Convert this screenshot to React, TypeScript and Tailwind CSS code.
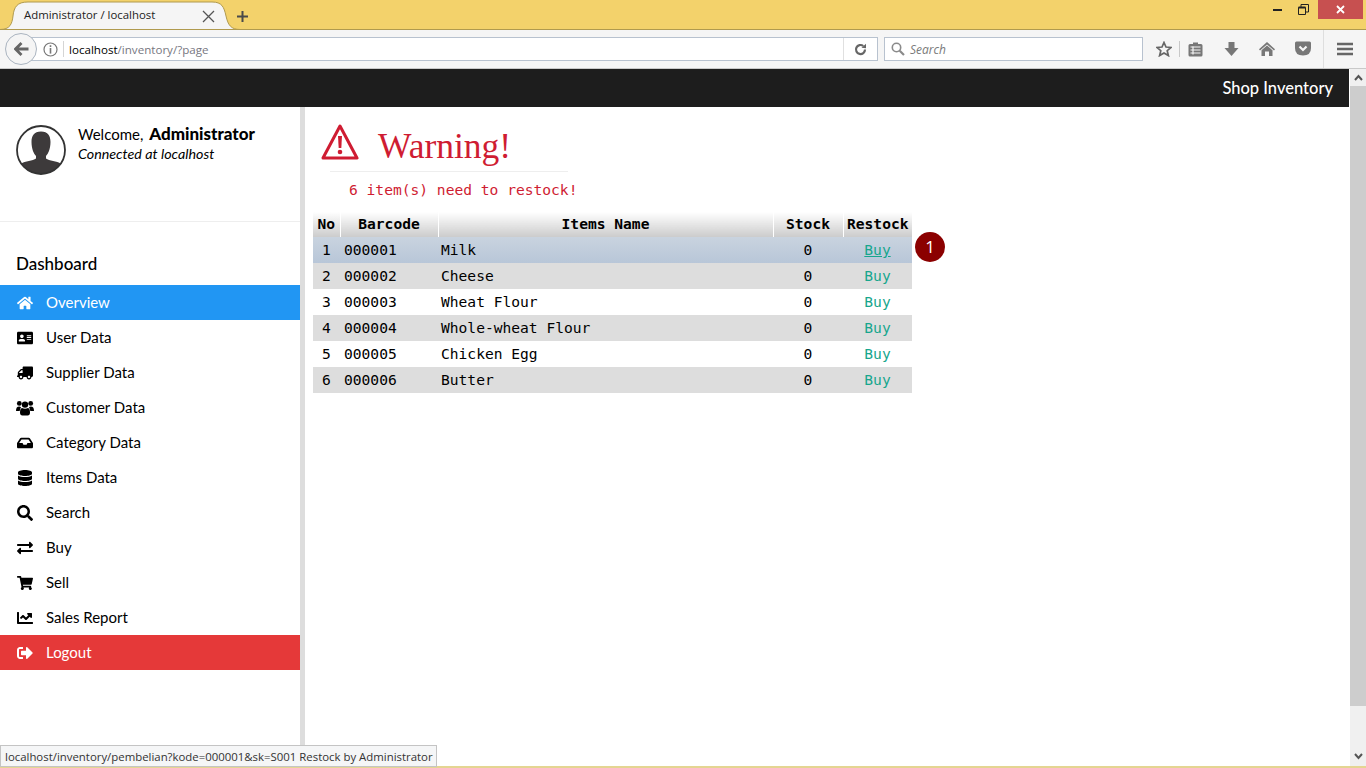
// App.tsx
import React from "react";
import {
  FaHome,
  FaAddressCard,
  FaTruck,
  FaInbox,
  FaDatabase,
  FaSearch,
  FaExchangeAlt,
  FaShoppingCart,
  FaChartLine,
  FaSignOutAlt,
} from "react-icons/fa";

// FA4 style users icon, the package one is too flat
const UsersIcon = ({ className }: { className?: string }) => (
  <svg className={className} width="18" height="16" viewBox="0 0 18 16" fill="currentColor">
    <circle cx="3.3" cy="3.4" r="2.4" />
    <circle cx="14.7" cy="3.4" r="2.4" />
    <circle cx="9" cy="4.6" r="3.2" />
    <path d="M0 11 Q0 6.6 3.2 6.6 Q4.2 6.6 5 7.3 Q4 9 3.7 11 H0 Z" />
    <path d="M18 11 Q18 6.6 14.8 6.6 Q13.8 6.6 13 7.3 Q14 9 14.3 11 H18 Z" />
    <path d="M6 8 Q9 9.6 12 8 Q14 8.4 14 12.6 Q14 15.5 11.6 15.5 H6.4 Q4 15.5 4 12.6 Q4 8.4 6 8 Z" />
  </svg>
);

const TruckIcon = ({ className }: { className?: string }) => (
  <FaTruck className={`${className} -scale-x-100`} />
);

const menu = [
  { label: "Overview", icon: FaHome, active: "bg-[#2196f3] text-white" },
  { label: "User Data", icon: FaAddressCard, active: "" },
  { label: "Supplier Data", icon: TruckIcon, active: "" },
  { label: "Customer Data", icon: UsersIcon, active: "" },
  { label: "Category Data", icon: FaInbox, active: "" },
  { label: "Items Data", icon: FaDatabase, active: "" },
  { label: "Search", icon: FaSearch, active: "" },
  { label: "Buy", icon: FaExchangeAlt, active: "" },
  { label: "Sell", icon: FaShoppingCart, active: "" },
  { label: "Sales Report", icon: FaChartLine, active: "" },
  { label: "Logout", icon: FaSignOutAlt, active: "bg-[#e53939] text-white" },
];

const items = [
  { no: 1, code: "000001", name: "Milk" },
  { no: 2, code: "000002", name: "Cheese" },
  { no: 3, code: "000003", name: "Wheat Flour" },
  { no: 4, code: "000004", name: "Whole-wheat Flour" },
  { no: 5, code: "000005", name: "Chicken Egg" },
  { no: 6, code: "000006", name: "Butter" },
];

const TabBar = () => (
  <div className="h-[30px] flex bg-[#f3d26b] border-b border-[#b09a4e] relative shrink-0">
    {/* tab shape */}
    <svg className="absolute left-0 top-0" width="240" height="30" viewBox="0 0 240 30">
      <path
        d="M0 29.5 C10 29.5 12 24 13 16 C14 7 17 2 28 2 L212 2 C222 2 224 7 226 16 C228 25 231 29.5 240 29.5 Z"
        fill="#f5f5f5"
        stroke="#b09a4e"
      />
    </svg>
    <span className="relative ml-[24px] mt-[7px] text-[11.4px] leading-[16px] text-[#222] font-['Open_Sans',sans-serif]">
      Administrator / localhost
    </span>
    <svg className="absolute left-[202px] top-[10px]" width="13" height="13" viewBox="0 0 13 13">
      <path d="M1 1 L12 12 M12 1 L1 12" stroke="#555" strokeWidth="1.3" />
    </svg>
    <svg className="absolute left-[236px] top-[10px]" width="13" height="13" viewBox="0 0 13 13">
      <path d="M6.5 1 V12 M1 6.5 H12" stroke="#4a4a4a" strokeWidth="2" />
    </svg>
    {/* window controls */}
    <svg className="absolute left-[1273px] top-[8px]" width="10" height="4" viewBox="0 0 10 4">
      <rect y="1" width="9" height="2" fill="#222" />
    </svg>
    <svg className="absolute left-[1298px] top-[4px]" width="11" height="11" viewBox="0 0 11 11">
      <path d="M0.5 3.5 H7.5 V10.5 H0.5 Z M3 3 V0.5 H10.5 V8 H8" fill="none" stroke="#222" />
      <path d="M0.5 3.5 H7.5" stroke="#222" strokeWidth="2" />
    </svg>
    <div className="absolute left-[1318px] top-0 w-[45px] h-[19px] bg-[#c75050] flex items-center justify-center">
      <svg width="9" height="9" viewBox="0 0 9 9">
        <path d="M1 1 L8 8 M8 1 L1 8" stroke="#fff" strokeWidth="1.8" />
      </svg>
    </div>
  </div>
);

const Toolbar = () => (
  <div className="h-[39px] bg-[#f5f5f5] border-b border-[#c9c9c9] relative flex items-center shrink-0 font-['Open_Sans',sans-serif]">
    {/* url bar */}
    <div className="ml-[20px] w-[858px] h-[24px] bg-white border border-[#b8c2cf] flex items-center">
      <svg className="ml-[22px]" width="15" height="15" viewBox="0 0 15 15">
        <circle cx="7.5" cy="7.5" r="6.5" fill="none" stroke="#777" strokeWidth="1.2" />
        <rect x="6.7" y="3.2" width="1.6" height="1.8" fill="#777" />
        <rect x="6.7" y="6" width="1.6" height="5.6" fill="#777" />
      </svg>
      <div className="ml-[5px] w-px h-[16px] bg-[#d5d5d5]" />
      <span className="ml-[5px] mt-[2px] text-[11.6px] text-black">
        localhost<span className="text-[#77777f]">/inventory/?page</span>
      </span>
      <div className="ml-auto w-px h-[22px] bg-[#e0e0e0]" />
      <svg className="mx-[10px]" width="13" height="13" viewBox="0 0 13 13">
        <path d="M11 6.5 A4.5 4.5 0 1 1 9.3 3" fill="none" stroke="#666" strokeWidth="2.2" />
        <path d="M7.5 4.8 L12 5.2 V0.8 Z" fill="#666" />
      </svg>
    </div>
    {/* search box */}
    <div className="ml-[6px] w-[259px] h-[24px] bg-white border border-[#b8c2cf] flex items-center">
      <svg className="ml-[6px]" width="14" height="14" viewBox="0 0 14 14">
        <circle cx="5.5" cy="5.5" r="4.2" fill="none" stroke="#8a8a8a" strokeWidth="1.6" />
        <path d="M8.7 8.7 L13 13" stroke="#8a8a8a" strokeWidth="2.2" />
      </svg>
      <span className="ml-[5px] mt-[2px] text-[12px] italic text-[#7a7a7a]">Search</span>
    </div>
    {/* back button */}
    <div className="absolute left-[5px] top-[3px] w-[32px] h-[32px] rounded-full bg-[#f5f5f5] border border-[#aab4c0] flex items-center justify-center">
      <svg width="15" height="14" viewBox="0 0 15 14">
        <path d="M7.5 1 L1.5 7 L7.5 13 M2 7 H14.5" fill="none" stroke="#666" strokeWidth="2.8" />
      </svg>
    </div>
    {/* right side icons */}
    <svg className="absolute left-[1156px] top-[11px]" width="16" height="16" viewBox="0 0 16 16">
      <path d="M8 1.5 L10 6 L15 6.5 L11.2 9.7 L12.4 14.6 L8 12 L3.6 14.6 L4.8 9.7 L1 6.5 L6 6 Z" fill="none" stroke="#666" strokeWidth="1.7" />
    </svg>
    <div className="absolute left-[1179px] top-[11px] w-px h-[16px] bg-[#c8c8c8]" />
    <svg className="absolute left-[1188px] top-[11px]" width="15" height="16" viewBox="0 0 15 16">
      <path d="M2 3 H5 V1.5 H10 V3 H13 Q14.5 3 14.5 4.5 V14 Q14.5 15.5 13 15.5 H2 Q0.5 15.5 0.5 14 V4.5 Q0.5 3 2 3 Z" fill="#777" />
      <path d="M2.5 6 H12.5 M2.5 9 H12.5 M2.5 12 H12.5" stroke="#f5f5f5" strokeWidth="1.2" />
      <path d="M5 5.5 V13.5" stroke="#f5f5f5" strokeWidth="1.2" />
    </svg>
    <svg className="absolute left-[1224px] top-[11px]" width="15" height="16" viewBox="0 0 15 16">
      <path d="M4.5 1 H10.5 V7 H14.5 L7.5 15 L0.5 7 H4.5 Z" fill="#777" />
    </svg>
    <svg className="absolute left-[1259px] top-[11px]" width="16" height="16" viewBox="0 0 16 16">
      <path d="M8 1 L16 8.2 L15 9.5 L8 3.4 L1 9.5 L0 8.2 Z" fill="#777" />
      <path d="M8 4.6 L13.5 9.3 V15 H10 V10.5 H6 V15 H2.5 V9.3 Z" fill="#777" />
    </svg>
    <svg className="absolute left-[1295px] top-[11px]" width="16" height="15" viewBox="0 0 16 15">
      <path d="M1.5 0.5 H14.5 Q16 0.5 16 2 V7 Q16 14.5 8 14.5 Q0 14.5 0 7 V2 Q0 0.5 1.5 0.5 Z" fill="#777" />
      <path d="M4.5 5.5 L8 9 L11.5 5.5" fill="none" stroke="#f5f5f5" strokeWidth="2.2" />
    </svg>
    <div className="absolute left-[1323px] top-0 w-px h-[38px] bg-[#dedede]" />
    <svg className="absolute left-[1337px] top-[12px]" width="16" height="14" viewBox="0 0 16 14">
      <path d="M0 2 H16 M0 7 H16 M0 12 H16" stroke="#666" strokeWidth="2.6" />
    </svg>
  </div>
);

const Avatar = () => (
  <svg width="50" height="50" viewBox="0 0 50 50" className="shrink-0">
    <defs>
      <clipPath id="avatarClip">
        <circle cx="25" cy="25" r="24" />
      </clipPath>
    </defs>
    <circle cx="25" cy="25" r="24" fill="#fff" />
    <g clipPath="url(#avatarClip)" fill="#3d3a3b">
      <path d="M25 6.5 C18 6.5 15.5 11 15.5 17 C15.5 24 18 29 20 31 V33.5 C17 36 9 35.5 5 39 L5 50 H45 V39 C41 35.5 33 36 30 33.5 V31 C32 29 34.5 24 34.5 17 C34.5 11 32 6.5 25 6.5 Z" />
    </g>
    <circle cx="25" cy="25" r="24" fill="none" stroke="#333" strokeWidth="1.8" />
  </svg>
);

const Sidebar = () => (
  <aside className="w-[305px] shrink-0 border-r-[5px] border-[#dddddd] bg-white font-['Lato',sans-serif] text-black">
    <div className="h-[115px] border-b border-[#eeeeee] flex pl-[16px] pt-[18px]">
      <Avatar />
      <div className="ml-[12px] -mt-[1px] text-[15px] leading-[20px]">
        <div>
          Welcome, <b className="ml-[2px] text-[17px] font-black">Administrator</b>
        </div>
        <div className="italic text-[14.3px]">Connected at localhost</div>
      </div>
    </div>
    <div className="pl-[16px] pt-[31px] pb-[11px] text-[17px] leading-[21px] font-medium">Dashboard</div>
    <nav>
      {menu.map((m) => (
        <div key={m.label} className={`h-[35px] flex items-center text-[15px] ${m.active}`}>
          <span className="w-[46px] flex justify-center pl-[7px] pr-[3px]">
            <m.icon className="text-[16px]" />
          </span>
          {m.label}
        </div>
      ))}
    </nav>
  </aside>
);

const thClass = "p-0 pb-[2px] border-r border-white bg-gradient-to-b from-white to-[#cccccc] text-center font-bold";

const StockTable = () => (
  <div className="relative w-[599px] ml-[8px] mt-[13px]">
    <table className="w-[599px] table-fixed border-collapse text-[14.6px] text-black">
      <colgroup>
        <col className="w-[27px]" />
        <col className="w-[98px]" />
        <col className="w-[335px]" />
        <col className="w-[70px]" />
        <col className="w-[69px]" />
      </colgroup>
      <thead>
        <tr className="h-[25px]">
          <th className={thClass}>No</th>
          <th className={thClass}>Barcode</th>
          <th className={thClass}>Items Name</th>
          <th className={thClass}>Stock</th>
          <th className="p-0 pb-[2px] bg-gradient-to-b from-white to-[#cccccc] text-center font-bold">Restock</th>
        </tr>
      </thead>
      <tbody>
        {items.map((item, i) => (
          <tr
            key={item.no}
            className={
              i === 0
                ? "bg-gradient-to-b from-[#c9d3df] to-[#b8c6d8]"
                : i % 2 === 1
                  ? "bg-[#dddddd]"
                  : "bg-white"
            }
          >
            <td className="h-[26px] p-0 text-center">{item.no}</td>
            <td className="p-0 pl-[4px]">{item.code}</td>
            <td className="p-0 pl-[3px]">{item.name}</td>
            <td className="p-0 text-center">0</td>
            <td className={`p-0 text-center text-[#17a68d] ${i === 0 ? "underline" : ""}`}>Buy</td>
          </tr>
        ))}
      </tbody>
    </table>
    {/* step marker */}
    <div className="absolute left-[602px] top-[20px] w-[30px] h-[30px] rounded-full bg-[#8b0000] text-white flex items-center justify-center text-[17px] font-['Open_Sans',sans-serif]">
      1
    </div>
  </div>
);

const App: React.FC = () => {
  return (
    <div className="w-[1366px] h-[768px] overflow-hidden flex flex-col relative bg-white">
      <TabBar />
      <Toolbar />
      <div className="flex-1 min-h-0 flex">
        <div className="flex-1 flex flex-col min-w-0">
          {/* Header */}
          <header className="h-[38px] shrink-0 bg-[#1d1d1d] text-white flex items-center justify-end pr-[16px] border-r border-white text-[16.5px] font-medium font-['Lato',sans-serif]">
            Shop Inventory
          </header>
          <div className="flex-1 flex min-h-0">
            <Sidebar />
            <main className="flex-1 font-['DejaVu_Sans_Mono',monospace]">
              <div className="flex items-center pl-[16px] pt-[16px] h-[54px]">
                <svg width="38" height="38" viewBox="0 0 38 38">
                  <path d="M19 3 L36 35 H2 Z" fill="none" stroke="#cf1c32" strokeWidth="3" strokeLinejoin="round" />
                  <path d="M17 13 H21 L20.3 25 H17.7 Z" fill="#cf1c32" />
                  <circle cx="19" cy="29" r="2.3" fill="#cf1c32" />
                </svg>
                <h1 className="ml-[19px] mt-[8px] text-[35.5px] leading-[44px] text-[#cf1c32] font-['Liberation_Serif',serif]">
                  Warning!
                </h1>
              </div>
              <div className="ml-[25px] w-[238px] h-px mt-[10px] bg-[#eeeeee]" />
              <p className="ml-[44px] mt-[9px] text-[14.6px] leading-[18px] text-[#cf1c32]">6 item(s) need to restock!</p>
              <StockTable />
            </main>
          </div>
        </div>
        {/* Scrollbar */}
        <div className="w-[16px] shrink-0 bg-[#f0f0f0] flex flex-col items-center">
          <svg className="mt-[5px] mb-[5px]" width="9" height="7" viewBox="0 0 9 7">
            <path d="M1 6 L4.5 2 L8 6" fill="none" stroke="#555" strokeWidth="2" />
          </svg>
          <div className="w-full h-[620px] bg-[#cdcdcd]" />
          <svg className="mt-auto mb-[6px]" width="9" height="7" viewBox="0 0 9 7">
            <path d="M1 1 L4.5 5 L8 1" fill="none" stroke="#555" strokeWidth="2" />
          </svg>
        </div>
      </div>
      <div className="h-[2px] shrink-0 bg-[#e4d592]" />
      {/* link status popup */}
      <div className="absolute left-0 top-[745px] h-[22px] w-[437px] bg-[#f5f6f7] border border-[#c4c4c4] pl-[4px] text-[11.4px] leading-[22px] text-[#333] font-['Open_Sans',sans-serif] whitespace-nowrap">
        localhost/inventory/pembelian?kode=000001&amp;sk=S001 Restock by Administrator
      </div>
    </div>
  );
};

export default App;
